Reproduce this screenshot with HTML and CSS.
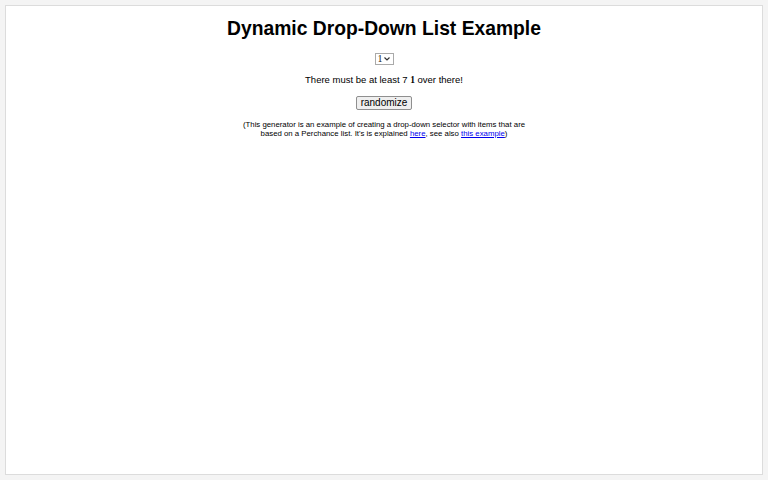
FILE: index.html
```html
<!DOCTYPE html>
<html lang="en">
<head>
  <meta charset="UTF-8">
  <meta name="viewport" content="width=device-width, initial-scale=1.0">
  <title>Dynamic Drop-Down List Example</title>
  <link rel="stylesheet" href="styles.css">
</head>
<body>
  <div class="frame">
    <h1>Dynamic Drop-Down List Example</h1>
    <div class="row">
      <select id="amount" class="picker">
        <option>1</option>
        <option>2</option>
        <option>3</option>
      </select>
    </div>
    <p class="output">There must be at least 7 <b id="out">1</b> over there!</p>
    <div class="row">
      <button class="btn" onclick="update()">randomize</button>
    </div>
    <p class="note">(This generator is an example of creating a drop-down selector with items that are<br>based on a Perchance list. It's is explained <a href="#">here</a>, see also <a href="#">this example</a>)</p>
  </div>
  <script>
    function update() {
      document.getElementById('out').textContent = document.getElementById('amount').value;
    }
  </script>
</body>
</html>
```

FILE: styles.css
```css
html, body {
  height: 100%;
}
body {
  margin: 0;
  padding: 5px;
  box-sizing: border-box;
  background: #f4f4f4;
  font-family: "Liberation Sans", Arial, sans-serif;
  color: #000;
}
.frame {
  height: 100%;
  box-sizing: border-box;
  background: #fff;
  border: 1px solid #dcdcdc;
  text-align: center;
  padding-top: 12px;
}
h1 {
  font-size: 19.3px;
  line-height: 22px;
  margin: 0 0 13px;
}
.row {
  line-height: 0;
}
.picker {
  -webkit-appearance: none;
  appearance: none;
  width: 19px;
  height: 12px;
  box-sizing: border-box;
  padding: 0 0 0 2px;
  font-family: "Liberation Serif", serif;
  font-size: 10px;
  line-height: 10px;
  color: #222;
  border: 1px solid #aaa;
  border-radius: 0;
  background: #fff url("data:image/svg+xml,%3Csvg xmlns='http://www.w3.org/2000/svg' width='6' height='4'%3E%3Cpath d='M0.5 0.5L3 3L5.5 0.5' fill='none' stroke='%23333' stroke-width='1.2'/%3E%3C/svg%3E") no-repeat right 3px center;
  vertical-align: top;
}
.output {
  font-size: 9.5px;
  line-height: 11px;
  margin: 9px 0 10px;
}
.output b {
  font-family: "Liberation Serif", serif;
}
.btn {
  font-family: "Liberation Sans", Arial, sans-serif;
  font-size: 10px;
  line-height: 12px;
  height: 14px;
  padding: 0 4px;
  background: #efefef;
  border: 1px solid #8f8f8f;
  border-radius: 2px;
  vertical-align: top;
}
.note {
  font-size: 7.8px;
  line-height: 9px;
  margin: 10px 0 0;
}
.note a {
  color: #00e;
}
```
